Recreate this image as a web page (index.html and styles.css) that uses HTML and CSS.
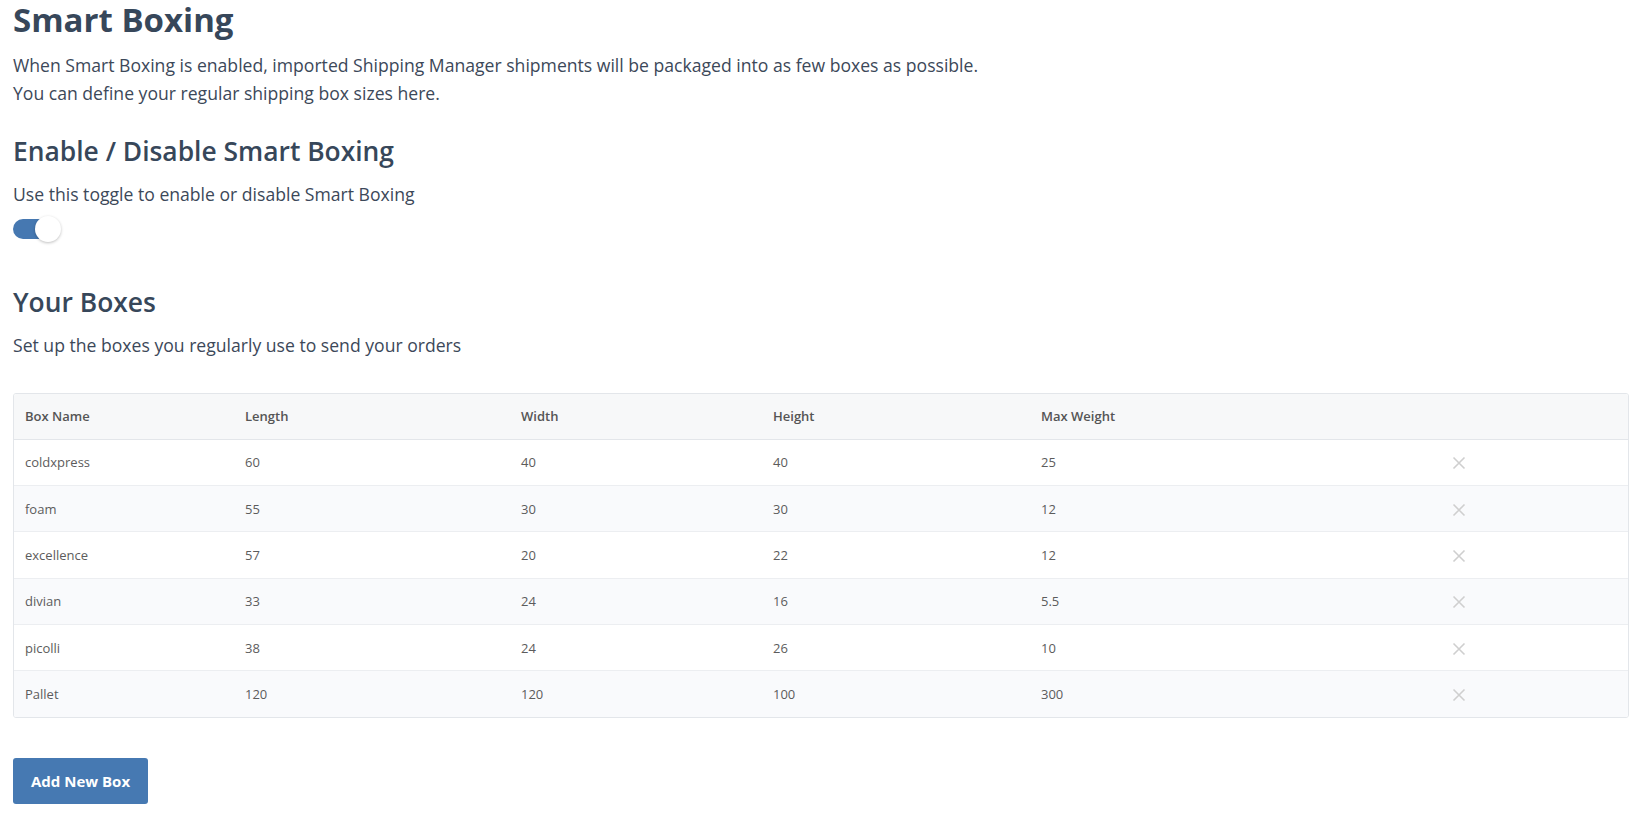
FILE: index.html
```html
<!DOCTYPE html>
<html lang="en">
<head>
<meta charset="utf-8">
<title>Smart Boxing</title>
<link rel="stylesheet" href="styles.css">
</head>
<body>
<main class="page">
  <h1 class="title">Smart Boxing</h1>
  <p class="intro">When Smart Boxing is enabled, imported Shipping Manager shipments will be packaged into as few boxes as possible.<br>You can define your regular shipping box sizes here.</p>

  <h2 class="section-title first">Enable / Disable Smart Boxing</h2>
  <p class="section-desc">Use this toggle to enable or disable Smart Boxing</p>
  <div class="toggle on"><span class="track"></span><span class="knob"></span></div>

  <h2 class="section-title second">Your Boxes</h2>
  <p class="section-desc">Set up the boxes you regularly use to send your orders</p>

  <div class="table-wrap">
    <table class="boxes">
      <colgroup>
        <col class="c1"><col class="c2"><col class="c3"><col class="c4"><col class="c5"><col class="c6">
      </colgroup>
      <thead>
        <tr><th>Box Name</th><th>Length</th><th>Width</th><th>Height</th><th>Max Weight</th><th></th></tr>
      </thead>
      <tbody>
        <tr><td>coldxpress</td><td>60</td><td>40</td><td>40</td><td>25</td><td class="del"><svg viewBox="0 0 14 14" width="14" height="14"><path d="M1.5 1.5L12.5 12.5M12.5 1.5L1.5 12.5"/></svg></td></tr>
        <tr><td>foam</td><td>55</td><td>30</td><td>30</td><td>12</td><td class="del"><svg viewBox="0 0 14 14" width="14" height="14"><path d="M1.5 1.5L12.5 12.5M12.5 1.5L1.5 12.5"/></svg></td></tr>
        <tr><td>excellence</td><td>57</td><td>20</td><td>22</td><td>12</td><td class="del"><svg viewBox="0 0 14 14" width="14" height="14"><path d="M1.5 1.5L12.5 12.5M12.5 1.5L1.5 12.5"/></svg></td></tr>
        <tr><td>divian</td><td>33</td><td>24</td><td>16</td><td>5.5</td><td class="del"><svg viewBox="0 0 14 14" width="14" height="14"><path d="M1.5 1.5L12.5 12.5M12.5 1.5L1.5 12.5"/></svg></td></tr>
        <tr><td>picolli</td><td>38</td><td>24</td><td>26</td><td>10</td><td class="del"><svg viewBox="0 0 14 14" width="14" height="14"><path d="M1.5 1.5L12.5 12.5M12.5 1.5L1.5 12.5"/></svg></td></tr>
        <tr><td>Pallet</td><td>120</td><td>120</td><td>100</td><td>300</td><td class="del"><svg viewBox="0 0 14 14" width="14" height="14"><path d="M1.5 1.5L12.5 12.5M12.5 1.5L1.5 12.5"/></svg></td></tr>
      </tbody>
    </table>
  </div>

  <button class="btn-primary" type="button">Add New Box</button>
</main>
</body>
</html>
```

FILE: styles.css
```css
* { box-sizing: border-box; }
html, body { margin: 0; padding: 0; background: #ffffff; }
body {
  font-family: "Open Sans", "Noto Sans", sans-serif;
  color: #3a4757;
}
.page {
  padding: 0 6px 0 13px;
}
.title {
  margin: 0;
  font-size: 33px;
  line-height: 40px;
  font-weight: 700;
  color: #37475a;
}
.intro {
  margin: 11px 0 0;
  font-size: 17.6px;
  line-height: 28px;
  color: #3c4859;
}
.section-title {
  margin: 0;
  font-size: 26.4px;
  line-height: 31px;
  font-weight: 600;
  color: #37475a;
}
.section-title.first { margin-top: 29px; }
.section-title.second { margin-top: 45px; }
.section-desc {
  margin: 13px 0 0;
  font-size: 17.6px;
  line-height: 28px;
  color: #3c4859;
}
.toggle {
  position: relative;
  width: 48px;
  height: 26px;
  margin-top: 8px;
}
.toggle .track {
  position: absolute;
  left: 0;
  top: 3px;
  width: 42px;
  height: 20px;
  border-radius: 10px;
  background: #4678b1;
}
.toggle .knob {
  position: absolute;
  left: 22px;
  top: 0;
  width: 26px;
  height: 26px;
  border-radius: 50%;
  background: #ffffff;
  box-shadow: 0 1px 3px rgba(0,0,0,0.25);
}
.table-wrap {
  margin-top: 34px;
  border: 1px solid #e3e6ea;
  border-radius: 3px;
  overflow: hidden;
}
.boxes {
  width: 100%;
  border-collapse: collapse;
  table-layout: fixed;
  font-size: 13px;
  color: #5c5c5c;
}
.boxes col.c1 { width: 220px; }
.boxes col.c2 { width: 276px; }
.boxes col.c3 { width: 252px; }
.boxes col.c4 { width: 268px; }
.boxes col.c5 { width: 412px; }
.boxes th, .boxes td {
  padding: 0 11px;
  text-align: left;
  vertical-align: middle;
}
.boxes th {
  height: 45px;
  font-weight: 600;
  background: #f7f8f9;
  color: #555555;
  border-bottom: 1px solid #e3e6ea;
}
.boxes td { height: 46.4px; }
.boxes tbody tr td { border-top: 1px solid #eceef1; }
.boxes tbody tr:first-child td { border-top: none; }
.boxes tbody tr:nth-child(even) td { background: #f9fafc; }
.boxes td.del svg {
  display: block;
  margin-left: -1px;
  margin-top: 2px;
}
.boxes td.del path {
  stroke: #cfcfcf;
  stroke-width: 1.6;
  fill: none;
}
.btn-primary {
  display: block;
  margin-top: 40px;
  height: 46px;
  padding: 0 18px;
  border: none;
  border-radius: 3px;
  background: #4679b2;
  color: #ffffff;
  font-family: "Open Sans", "Noto Sans", sans-serif;
  font-size: 15px;
  font-weight: 700;
  cursor: pointer;
}
```
